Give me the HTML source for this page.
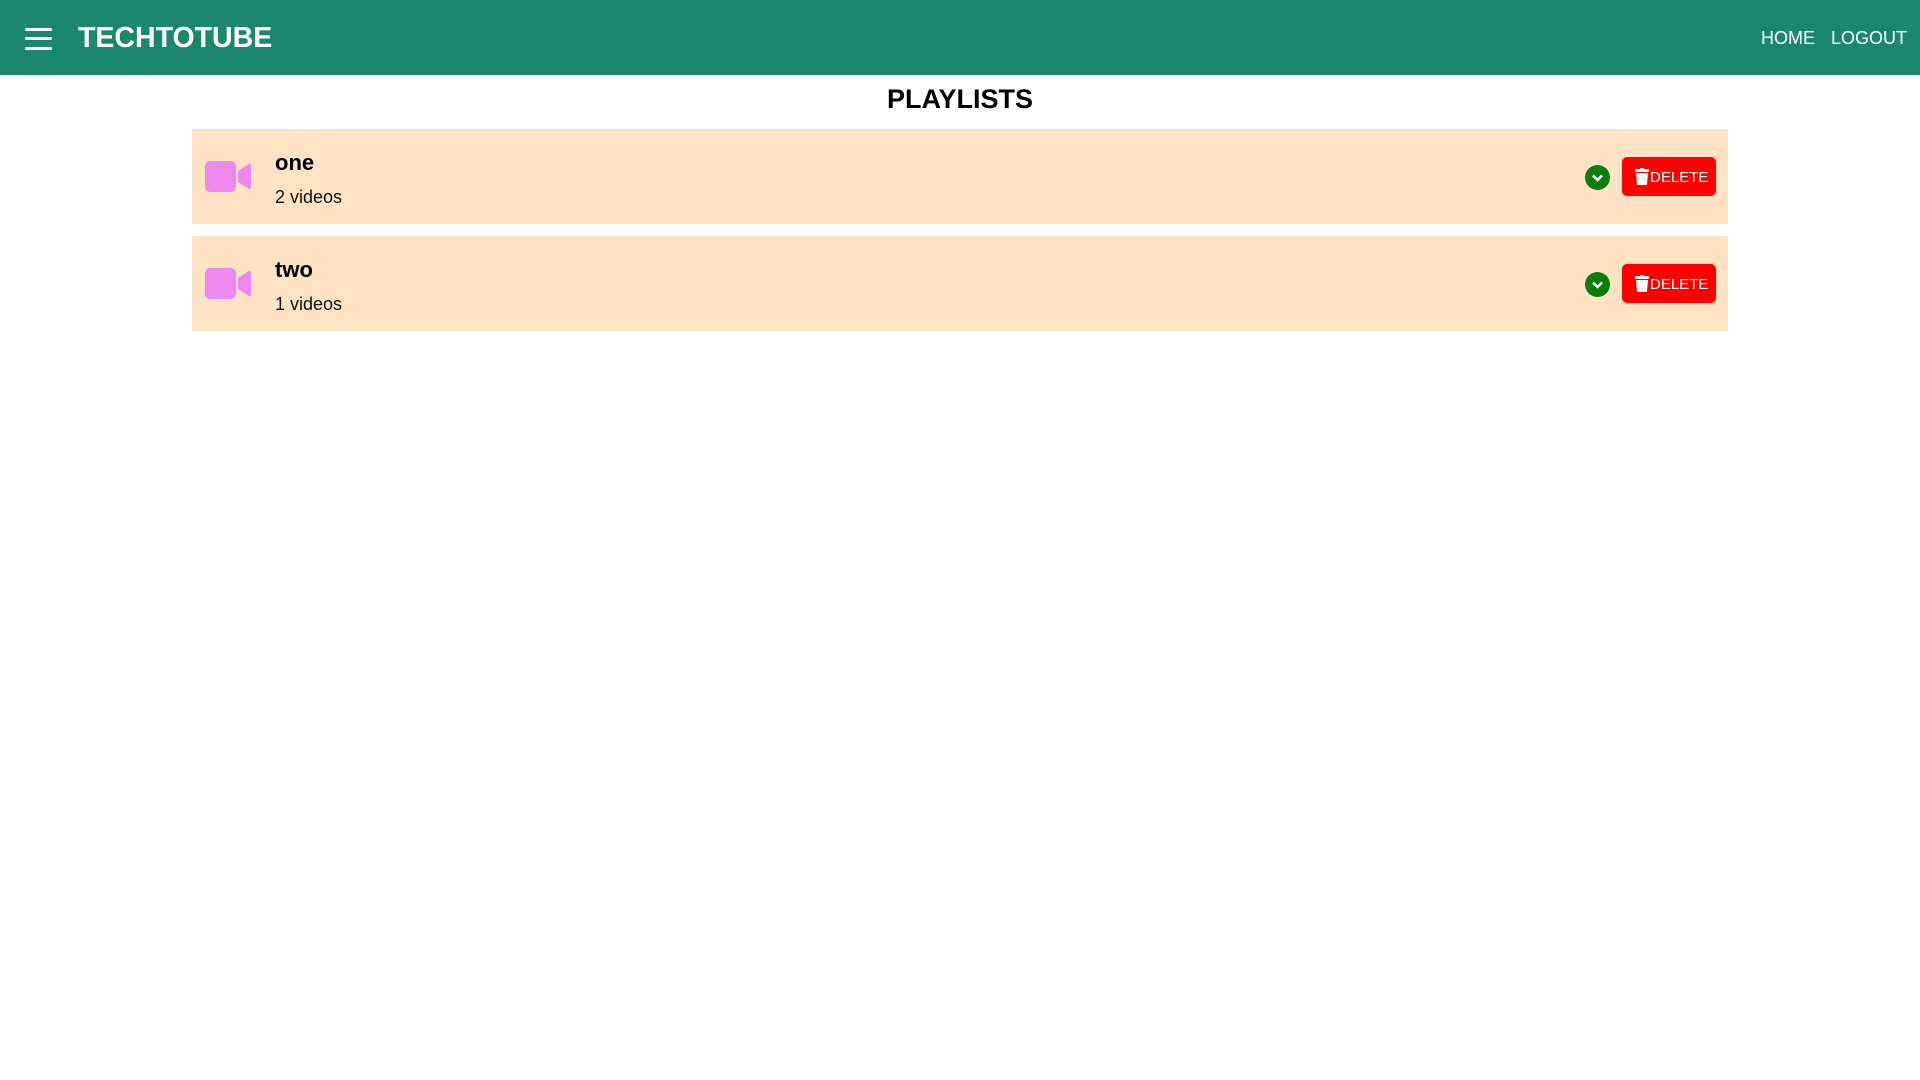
<!DOCTYPE html>
<html><head><style>
body{margin:0;width:1920px;height:1080px;background:#fff;font-family:"Liberation Sans",sans-serif;position:relative;overflow:hidden}
.hdr{position:absolute;left:0;top:0;width:1920px;height:75px;background:#1b876d}
.ham{position:absolute;left:25px;width:27px;height:3px;background:#fff;border-radius:2px}
.title{position:absolute;left:78px;top:22px;color:#fff;font-weight:bold;font-size:28.5px}
.nav{position:absolute;top:28px;color:#fff;font-size:18px}
h1{position:absolute;top:84px;left:0;width:1920px;text-align:center;margin:0;font-size:27px;font-weight:bold;color:#000}
.row{position:absolute;left:192px;width:1536px;height:95px;background:#fde3c3}
.name{position:absolute;left:83px;top:21px;font-size:22px;font-weight:bold}
.cnt{position:absolute;left:83px;top:58px;font-size:18px;color:#111}
.chk{position:absolute;left:1393px;top:36px;width:25px;height:25px;border-radius:50%;background:#0a7d0a}
.del{position:absolute;left:1430px;top:28px;width:94px;height:39px;background:#f00;border-radius:5px;color:#fff;font-size:15px;line-height:41px}
</style></head><body>
<div class="hdr">
<div class="ham" style="top:28px"></div><div class="ham" style="top:37px"></div><div class="ham" style="top:47px"></div>
<div class="title">TECHTOTUBE</div>
<div class="nav" style="left:1761px">HOME</div>
<div class="nav" style="left:1831px">LOGOUT</div>
</div>
<h1>PLAYLISTS</h1>
<div class="row" style="top:129px">
<svg style="position:absolute;left:13px;top:32px" width="46" height="31" viewBox="0 0 46 31"><rect x="0" y="0" width="31" height="31" rx="5" fill="#ee88ee"/><path d="M33 10 L44 3 Q46 2 46 5 L46 26 Q46 29 44 28 L33 21Z" fill="#ee88ee"/></svg>
<div class="name">one</div><div class="cnt">2 videos</div>
<div class="chk"><svg width="25" height="25"><path d="M8 10.5 L12.5 15 L17 10.5" stroke="#fff" stroke-width="2.5" fill="none"/></svg></div>
<div class="del"><svg style="position:absolute;left:13px;top:11px" width="14" height="17" viewBox="0 0 14 17"><rect x="0" y="1" width="14" height="3" rx="1" fill="#fff"/><rect x="5" y="0" width="4" height="2" fill="#fff"/><path d="M1 5 H13 L12 16 Q12 17 11 17 H3 Q2 17 2 16Z" fill="#fff"/></svg><span style="position:absolute;left:28px">DELETE</span></div>
</div>
<div class="row" style="top:236px">
<svg style="position:absolute;left:13px;top:32px" width="46" height="31" viewBox="0 0 46 31"><rect x="0" y="0" width="31" height="31" rx="5" fill="#ee88ee"/><path d="M33 10 L44 3 Q46 2 46 5 L46 26 Q46 29 44 28 L33 21Z" fill="#ee88ee"/></svg>
<div class="name">two</div><div class="cnt">1 videos</div>
<div class="chk"><svg width="25" height="25"><path d="M8 10.5 L12.5 15 L17 10.5" stroke="#fff" stroke-width="2.5" fill="none"/></svg></div>
<div class="del"><svg style="position:absolute;left:13px;top:11px" width="14" height="17" viewBox="0 0 14 17"><rect x="0" y="1" width="14" height="3" rx="1" fill="#fff"/><rect x="5" y="0" width="4" height="2" fill="#fff"/><path d="M1 5 H13 L12 16 Q12 17 11 17 H3 Q2 17 2 16Z" fill="#fff"/></svg><span style="position:absolute;left:28px">DELETE</span></div>
</div>
</body></html>
